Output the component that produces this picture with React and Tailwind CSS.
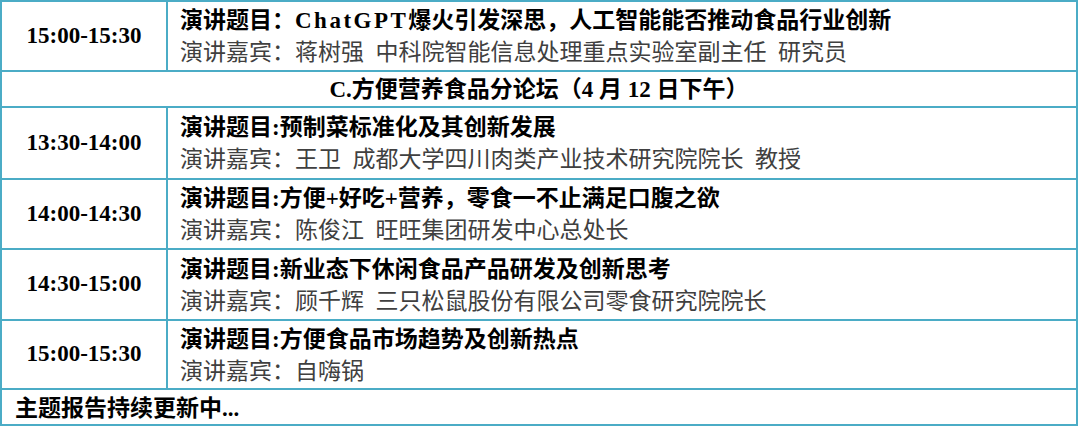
import React from "react";

const FONT = { fontFamily: '"Liberation Serif", "Noto Sans CJK SC", serif' };

const groupA = [
  {
    time: "15:00-15:30",
    title: (
      <>
        演讲题目：<span className="tracking-[2.5px]">ChatGPT</span>爆火引发深思，人工智能能否推动食品行业创新
      </>
    ),
    speaker: "演讲嘉宾：蒋树强  中科院智能信息处理重点实验室副主任  研究员",
    h: "h-[70px]",
  },
];

const groupC = [
  {
    time: "13:30-14:00",
    title: "演讲题目:预制菜标准化及其创新发展",
    speaker: "演讲嘉宾：王卫  成都大学四川肉类产业技术研究院院长  教授",
    h: "h-[72px]",
  },
  {
    time: "14:00-14:30",
    title: "演讲题目:方便+好吃+营养，零食一不止满足口腹之欲",
    speaker: "演讲嘉宾：陈俊江  旺旺集团研发中心总处长",
    h: "h-[70px]",
  },
  {
    time: "14:30-15:00",
    title: "演讲题目:新业态下休闲食品产品研发及创新思考",
    speaker: "演讲嘉宾：顾千辉  三只松鼠股份有限公司零食研究院院长",
    h: "h-[71px]",
  },
  {
    time: "15:00-15:30",
    title: "演讲题目:方便食品市场趋势及创新热点",
    speaker: "演讲嘉宾：自嗨锅",
    h: "h-[69px]",
  },
];

function Row({ r }) {
  return (
    <div className={`flex shrink-0 ${r.h} border-b-2 border-[#4bacc6]`}>
      <div className="w-[166px] shrink-0 flex items-center justify-center border-r-2 border-[#4bacc6] font-bold text-black">
        {r.time}
      </div>
      <div className="flex-1 flex flex-col justify-center pl-[12px] pt-[2px]">
        <div className="leading-[32px] font-bold text-black whitespace-pre">{r.title}</div>
        <div className="leading-[32px] text-[#404040] whitespace-pre">{r.speaker}</div>
      </div>
    </div>
  );
}

export default function App() {
  return (
    <div className="w-[1080px] h-[428px] bg-white">
      <div
        className="w-[1078px] h-[426px] border-2 border-[#4bacc6] text-[23px] flex flex-col bg-white"
        style={FONT}
      >
        {groupA.map((r, i) => (
          <Row key={"a" + i} r={r} />
        ))}
        <div className="h-[36px] shrink-0 flex items-center justify-center pt-[2px] border-b-2 border-[#4bacc6] font-bold text-black whitespace-pre">
          C.方便营养食品分论坛（4 月 12 日下午）
        </div>
        {groupC.map((r, i) => (
          <Row key={"c" + i} r={r} />
        ))}
        <div className="flex-1 flex items-center pl-[13px] pt-[2px] font-bold text-black">
          主题报告持续更新中...
        </div>
      </div>
    </div>
  );
}
